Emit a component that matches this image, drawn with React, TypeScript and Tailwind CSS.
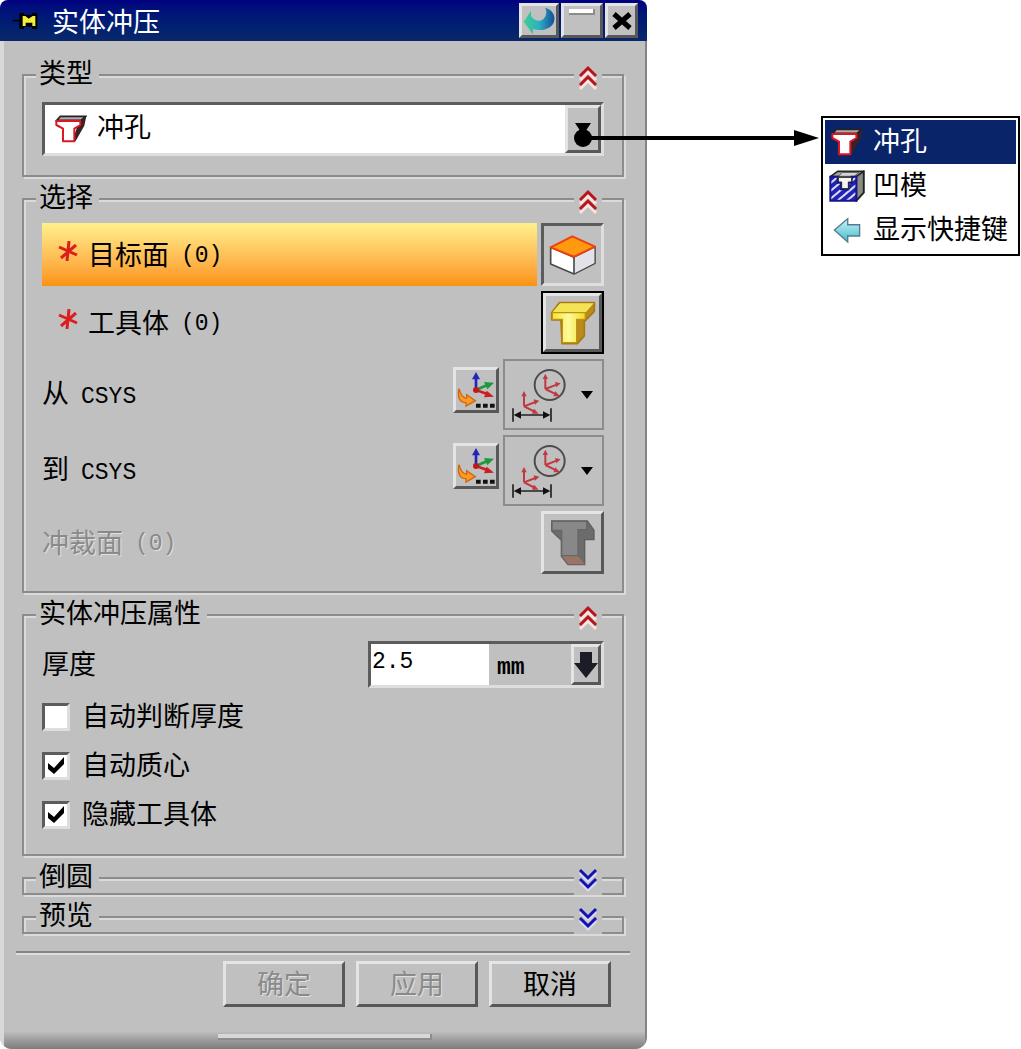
import { useState } from 'react'
import type { ReactNode } from 'react'

const RAISED = 'border-[3px] border-t-[#e4e4e4] border-l-[#e4e4e4] border-b-[#585858] border-r-[#585858] bg-[#c0c0c0]'
const SUNKEN = 'border-[3px] border-t-[#5c5c5c] border-l-[#5c5c5c] border-b-[#dedede] border-r-[#dedede]'
const MONO = "font-['Liberation_Mono',monospace] text-[23px]"

function PunchIcon() {
  return (
    <svg viewBox="0 0 96 84" className="w-8 h-7 shrink-0">
      <path d="M16 3H94L88 32L62 78H52L74 14Z" fill="#3a2222" />
      <path d="M16 4H92L78 16H5Z" fill="#b3abab" stroke="#222" strokeWidth="5" />
      <path d="M4 18H76V30L58 41V79H24V41L4 30Z" fill="#fff" stroke="#dc1622" strokeWidth="6" strokeLinejoin="round" />
    </svg>
  )
}

function DieIcon() {
  return (
    <svg viewBox="0 0 108 96" className="w-9 h-8 shrink-0">
      <defs>
        <pattern id="hatch" width="18" height="18" patternUnits="userSpaceOnUse" patternTransform="rotate(-40)">
          <rect width="18" height="18" fill="#dfe0fb" />
          <rect width="18" height="12" fill="#2424b4" />
        </pattern>
      </defs>
      <path d="M4 20L26 4H104V68L82 92V20Z" fill="#a9a9a9" stroke="#222" strokeWidth="5" strokeLinejoin="round" />
      <path d="M82 20L104 4V68L82 92Z" fill="#8b8b86" stroke="#222" strokeWidth="5" />
      <path d="M40 7H90L76 19H28Z" fill="#d4d4d4" stroke="#555" strokeWidth="3" />
      <path d="M4 20H26V38H36V58H58V38H68V20H82V92H4Z" fill="url(#hatch)" stroke="#16168a" strokeWidth="6" />
      <path d="M28 22H68V36H58V56H38V36H28Z" fill="#f4f4f4" stroke="#222" strokeWidth="3" />
    </svg>
  )
}

function BackArrowIcon() {
  return (
    <svg viewBox="0 0 84 80" className="w-9 h-7 shrink-0">
      <defs>
        <linearGradient id="cyan" x1="0" y1="0" x2="0" y2="1">
          <stop offset="0" stopColor="#c9f3f7" />
          <stop offset="1" stopColor="#45bccb" />
        </linearGradient>
      </defs>
      <path d="M6 40L44 8V25H78V57H44V74Z" fill="url(#cyan)" stroke="#527f8f" strokeWidth="4" />
    </svg>
  )
}

function FaceIcon() {
  return (
    <svg viewBox="0 0 144 126" className="w-12 h-[42px]">
      <path d="M5 40V90L75 120L138 88V40L75 70Z" fill="#fff" stroke="#4b4b4b" strokeWidth="5" strokeLinejoin="round" />
      <path d="M76 72L136 41V87L76 118Z" fill="#e2e2e8" />
      <path d="M75 68V120" stroke="#4b4b4b" strokeWidth="5" />
      <path d="M5 40L70 7L138 38L75 68Z" fill="#ff9a10" stroke="#f0400f" strokeWidth="6" strokeLinejoin="round" />
    </svg>
  )
}

function ToolIcon() {
  return (
    <svg viewBox="0 0 138 138" className="w-[46px] h-[46px]">
      <defs>
        <linearGradient id="gold" x1="0" y1="0" x2="1" y2="0">
          <stop offset="0" stopColor="#f6e630" />
          <stop offset="0.5" stopColor="#fdfa9c" />
          <stop offset="1" stopColor="#f1dc1c" />
        </linearGradient>
      </defs>
      <path d="M5 38L28 8H133V34L108 60L103 64V108L82 131H36L33 60H5Z" fill="#b98a1c" stroke="#a87812" strokeWidth="5" strokeLinejoin="round" />
      <path d="M30 10H131L108 36H8Z" fill="#f4e455" />
      <path d="M7 38H106V58H80V128H37V58H7Z" fill="url(#gold)" stroke="#c09018" strokeWidth="4" />
    </svg>
  )
}

function BlankedIcon() {
  return (
    <svg viewBox="0 0 138 144" className="w-[46px] h-12">
      <path d="M5 6H112L132 34V62H104V137H54L34 112V64L5 36Z" fill="#6c6c6c" stroke="#5f5f5f" strokeWidth="4" />
      <path d="M6 7H110V32H84V110H35V34H6Z" fill="#888" stroke="#666" strokeWidth="4" />
      <path d="M36 112H84L104 136H55Z" fill="#9a7566" />
    </svg>
  )
}

function CsysIcon() {
  return (
    <svg viewBox="0 0 120 120" className="w-10 h-10">
      <g fill="none" strokeWidth="8">
        <path d="M60 60V22" stroke="#2424b8" />
        <path d="M60 60L92 46" stroke="#1d9a3c" />
        <path d="M60 60L100 74" stroke="#cc2020" />
      </g>
      <path d="M60 6L72 28H48Z" fill="#2424b8" />
      <path d="M114 38L84 36L94 58Z" fill="#1d9a3c" />
      <path d="M114 80L92 62L84 82Z" fill="#cc2020" />
      <circle cx="60" cy="60" r="9" fill="#c01818" />
      <path d="M9 56C4 80 10 98 30 98V108L58 92L32 74V84C20 86 14 74 9 56Z" fill="#ff9a20" stroke="#cf6414" strokeWidth="4" />
      <path d="M60 101H74V113H60ZM81 101H95V113H81ZM102 101H116V113H102Z" fill="#111" />
    </svg>
  )
}

function Axes({ x, y }: { x: number; y: number }) {
  return (
    <g transform={`translate(${x} ${y})`} stroke="#c03a42" fill="#c03a42">
      <path d="M0 0V-36M0 0L34 -13M0 0L34 17" strokeWidth="6" fill="none" />
      <path d="M0 -46L8 -30H-8ZM46 -17L29 -21L33 -5ZM44 22L30 7L24 22Z" stroke="none" />
    </g>
  )
}

function OffsetCsysIcon() {
  return (
    <svg viewBox="0 0 168 168" className="w-14 h-14">
      <circle cx="116" cy="54" r="45" fill="none" stroke="#4c4c4c" strokeWidth="6" />
      <Axes x={103} y={66} />
      <Axes x={39} y={118} />
      <path d="M6 124V164M120 124V164M16 144H110" stroke="#222" strokeWidth="5" />
      <path d="M8 144L30 133V155ZM118 144L96 133V155Z" fill="#111" />
    </svg>
  )
}

function Chevrons({ open }: { open: boolean }) {
  return (
    <svg viewBox="0 0 28 28" className="w-7 h-7">
      {open ? (
        <>
          <path d="M6 16L14 8L22 16M6 25L14 17L22 25" stroke="#fbe3e0" strokeWidth="3" fill="none" />
          <path d="M6 12L14 4L22 12M6 21L14 13L22 21" stroke="#b8141e" strokeWidth="3" fill="none" />
        </>
      ) : (
        <>
          <path d="M6 6L14 14L22 6M6 15L14 23L22 15" stroke="#d9d9f4" strokeWidth="3" fill="none" />
          <path d="M6 3L14 11L22 3M6 12L14 20L22 12" stroke="#1212b0" strokeWidth="3" fill="none" />
        </>
      )}
    </svg>
  )
}

function Group({ title, open = true, className, children }: { title: string; open?: boolean; className: string; children?: ReactNode }) {
  return (
    <section className={`border-2 border-[#8c8c8c] shadow-[2px_2px_0_#dadada,inset_2px_2px_0_#dadada] px-[18px] ${className}`}>
      <header className="-mt-4 -ml-[6px] h-8 flex justify-between">
        <h2 className="h-6 leading-6 pl-[3px] pr-[6px] bg-[#c0c0c0]">{title}</h2>
        <button type="button" aria-label={title} className="self-end w-7 h-7 mr-[2px] bg-[#c0c0c0]">
          <Chevrons open={open} />
        </button>
      </header>
      {children}
    </section>
  )
}

function PickRow({ label, active, children }: { label: string; active?: boolean; children: ReactNode }) {
  return (
    <div className="flex gap-1 h-[63px]">
      <div className={`flex-1 flex items-center pl-4 ${active ? 'bg-linear-to-b from-[#fff08c] to-[#fa920c]' : ''}`}>
        <svg viewBox="0 0 20 20" className="w-5 h-5 mr-[10px] mb-2">
          <path d="M11 0L9 20M1 6L19 14M18 4L3 17" stroke="#dc1e1e" strokeWidth="3" />
        </svg>
        <span className="pb-[2px]">{label}</span>
        <span className={`${MONO} ml-3 pt-[2px]`}>(0)</span>
      </div>
      {children}
    </div>
  )
}

function CsysRow({ label }: { label: string }) {
  return (
    <div className="flex items-start h-[71px]">
      <div className="flex-1 self-center">
        {label}
        <span className={`${MONO} ml-3`}>CSYS</span>
      </div>
      <button type="button" aria-label="CSYS" className={`w-[46px] h-[46px] mt-2 mr-1 ${RAISED}`}>
        <CsysIcon />
      </button>
      <button type="button" aria-label={label} className="w-[101px] h-[71px] border-2 border-[#8c8c8c] flex items-center justify-between pl-[6px] pr-[9px]">
        <OffsetCsysIcon />
        <svg viewBox="0 0 12 8" className="w-3 h-2">
          <path d="M0 0H12L6 8Z" fill="#000" />
        </svg>
      </button>
    </div>
  )
}

function CheckRow({ label, initial = false }: { label: string; initial?: boolean }) {
  const [checked, setChecked] = useState(initial)
  return (
    <label className="flex items-center gap-3 h-[49px]">
      <span className="grid w-7 h-7">
        <input
          type="checkbox"
          checked={checked}
          onChange={(e) => setChecked(e.target.checked)}
          className={`appearance-none col-start-1 row-start-1 w-7 h-7 bg-white ${SUNKEN}`}
        />
        {checked && (
          <svg viewBox="0 0 28 28" className="col-start-1 row-start-1 w-7 h-7 pointer-events-none">
            <path d="M6 11L12 16L22 5V12L12 22L6 17Z" fill="#000" />
          </svg>
        )}
      </span>
      <span className="pb-1">{label}</span>
    </label>
  )
}

function TitleBar() {
  return (
    <div className="h-[41px] shrink-0 flex items-center pl-3 pr-[9px] bg-linear-to-b from-[#000080] to-[#0a2868] text-white">
      <svg viewBox="0 0 78 54" className="w-[26px] h-[18px]">
        <path d="M2 26H26" stroke="#000" strokeWidth="5" />
        <path d="M22 3H36V8H60V3H76V51H60V44H36V51H22Z" fill="#000" />
        <path d="M32 12H40L50 20L62 12H70V42H61V32H41V42H32Z" fill="#f4ec3c" />
      </svg>
      <h1 className="flex-1 ml-[14px] leading-10">实体冲压</h1>
      <div className="flex gap-[2px] h-[35px]">
        <button type="button" aria-label="重置" className={`w-10 flex items-center justify-center ${RAISED}`}>
          <svg viewBox="0 0 96 84" className="w-8 h-7">
            <defs>
              <linearGradient id="reset" x1="0" y1="0" x2="1" y2="0">
                <stop offset="0" stopColor="#3fd08a" />
                <stop offset="0.5" stopColor="#2bafc4" />
                <stop offset="1" stopColor="#144f96" />
              </linearGradient>
            </defs>
            <path d="M2 44L24 12V27C34 44 54 46 64 33C71 24 72 10 66 2C90 8 99 28 92 47C82 68 52 73 30 66V82Z" fill="url(#reset)" />
          </svg>
        </button>
        <button type="button" aria-label="最小化" className={`w-[42px] flex justify-center ${RAISED}`}>
          <span className="w-[26px] h-[6px] mt-[3px] bg-white border-b-2 border-r-2 border-[#8c8c8c]" />
        </button>
        <button type="button" aria-label="关闭" className={`w-[33px] flex items-center justify-center ${RAISED}`}>
          <svg viewBox="0 0 20 18" className="w-5 h-[18px]">
            <path d="M2 2L18 16M18 2L2 16" stroke="#000" strokeWidth="5" />
          </svg>
        </button>
      </div>
    </div>
  )
}

const menu = [
  { label: '冲孔', icon: <PunchIcon />, selected: true },
  { label: '凹模', icon: <DieIcon /> },
  { label: '显示快捷键', icon: <BackArrowIcon /> },
]

export default function App() {
  const [thickness, setThickness] = useState('2.5')

  return (
    <main className="flex items-start bg-white text-black text-[27px] leading-8 font-['Noto_Sans_CJK_SC',sans-serif]">
      <div className="flex-1 min-w-[600px] rounded-t-lg rounded-b-xl overflow-hidden bg-[#c0c0c0]">
        <TitleBar />
        <div className="border-l-4 border-l-[#d8d8d8] border-r-2 border-r-[#858585]">
          <div className="pl-[18px] pr-[21px] pt-[33px] flex flex-col gap-[21px]">
            <Group title="类型" className="pb-[19px]">
              <div className={`mt-[10px] h-[54px] flex items-stretch bg-white ${SUNKEN}`}>
                <label htmlFor="punch-type" className="flex items-center pl-[10px]">
                  <PunchIcon />
                </label>
                <select id="punch-type" className="appearance-none flex-1 pl-[10px] pb-[6px] bg-white">
                  <option>冲孔</option>
                  <option>凹模</option>
                </select>
                <button type="button" aria-label="类型" className={`w-9 flex items-center justify-center ${RAISED}`}>
                  <svg viewBox="0 0 16 12" className="w-4 h-3">
                    <path d="M0 0H16L8 12Z" fill="#000" />
                  </svg>
                </button>
              </div>
            </Group>

            <Group title="选择" className="pb-[17px]">
              <div className="mt-[7px] flex flex-col gap-[5px]">
                <PickRow label="目标面" active>
                  <button type="button" aria-label="目标面" className={`w-[63px] flex items-center justify-center ${SUNKEN}`}>
                    <FaceIcon />
                  </button>
                </PickRow>
                <PickRow label="工具体">
                  <button type="button" aria-label="工具体" className="w-[63px] p-0 flex border-2 border-black bg-[#c0c0c0]">
                    <span className={`flex-1 h-full flex items-center justify-center ${RAISED}`}>
                      <ToolIcon />
                    </span>
                  </button>
                </PickRow>
                <CsysRow label="从" />
                <CsysRow label="到" />
                <div className="flex items-center h-[63px] text-[#8a8a8a] [text-shadow:1px_1px_0_#e0e0e0]">
                  <span className="pb-[2px]">冲裁面</span>
                  <span className={`${MONO} flex-1 ml-3 pt-[2px]`}>(0)</span>
                  <button type="button" disabled aria-label="冲裁面" className={`w-[63px] h-[63px] flex items-center justify-center ${RAISED}`}>
                    <BlankedIcon />
                  </button>
                </div>
              </div>
            </Group>

            <Group title="实体冲压属性" className="pb-[15px]">
              <div className="mt-[9px] mb-1 flex items-center justify-between">
                <label htmlFor="thickness" className="pb-1">厚度</label>
                <div className={`w-[236px] h-[47px] flex items-stretch ${SUNKEN}`}>
                  <input
                    id="thickness"
                    value={thickness}
                    onChange={(e) => setThickness(e.target.value)}
                    className={`${MONO} w-[118px] pl-px pb-[6px] bg-white`}
                  />
                  <span className={`${MONO} flex-1 pl-2 pt-2 font-bold`}>mm</span>
                  <button type="button" aria-label="厚度" className={`w-[30px] flex items-center justify-center ${RAISED}`}>
                    <svg viewBox="0 0 24 26" className="w-6 h-[26px] shrink-0">
                      <path d="M6 0H18V11H24L12 26L0 11H6Z" fill="#1a1c26" />
                    </svg>
                  </button>
                </div>
              </div>
              <CheckRow label="自动判断厚度" />
              <CheckRow label="自动质心" initial />
              <CheckRow label="隐藏工具体" initial />
            </Group>

            <Group title="倒圆" open={false} className="h-[18px]" />
            <Group title="预览" open={false} className="h-[18px]" />
          </div>

          <hr className="mt-[17px] ml-3 mr-[15px] border-0 h-1 bg-[#dedede] border-t-2 border-[#858585]" />
          <div className="mt-[6px] pr-[34px] flex justify-end gap-[11px]">
            <button type="button" disabled className={`w-[122px] h-[46px] text-[#8a8a8a] [text-shadow:1px_1px_0_#e0e0e0] pb-[2px] ${RAISED}`}>确定</button>
            <button type="button" disabled className={`w-[122px] h-[46px] text-[#8a8a8a] [text-shadow:1px_1px_0_#e0e0e0] pb-[2px] ${RAISED}`}>应用</button>
            <button type="button" className={`w-[122px] h-[46px] pb-[2px] ${RAISED}`}>取消</button>
          </div>
          <div className="mt-6 h-[18px] pt-[3px] bg-linear-to-b from-[#c0c0c0] to-[#7c7c7c]">
            <div className="w-[214px] h-[6px] mx-auto bg-[#d8d8d8] border-b-2 border-r-2 border-[#8c8c8c]" />
          </div>
        </div>
      </div>

      <aside className="w-[374px] shrink-0 flex items-start">
        <svg viewBox="0 0 247 20" className="w-[247px] h-5 -ml-[73px] mt-32 shrink-0 pointer-events-none">
          <circle cx="9" cy="10" r="9" />
          <path d="M9 10H225" stroke="#000" strokeWidth="4" />
          <path d="M220 2L245 10L220 18Z" />
        </svg>
        <ul className="flex-1 mt-[116px] mr-px border-2 border-black bg-white p-[2px]">
          {menu.map((m) => (
            <li key={m.label}>
              <button type="button" className={`w-full h-11 flex items-center text-left pl-1 ${m.selected ? 'bg-[#0a246a] text-white' : ''}`}>
                <span className="w-9 mr-2 flex justify-center">{m.icon}</span>
                <span className="pb-1">{m.label}</span>
              </button>
            </li>
          ))}
        </ul>
      </aside>
    </main>
  )
}
